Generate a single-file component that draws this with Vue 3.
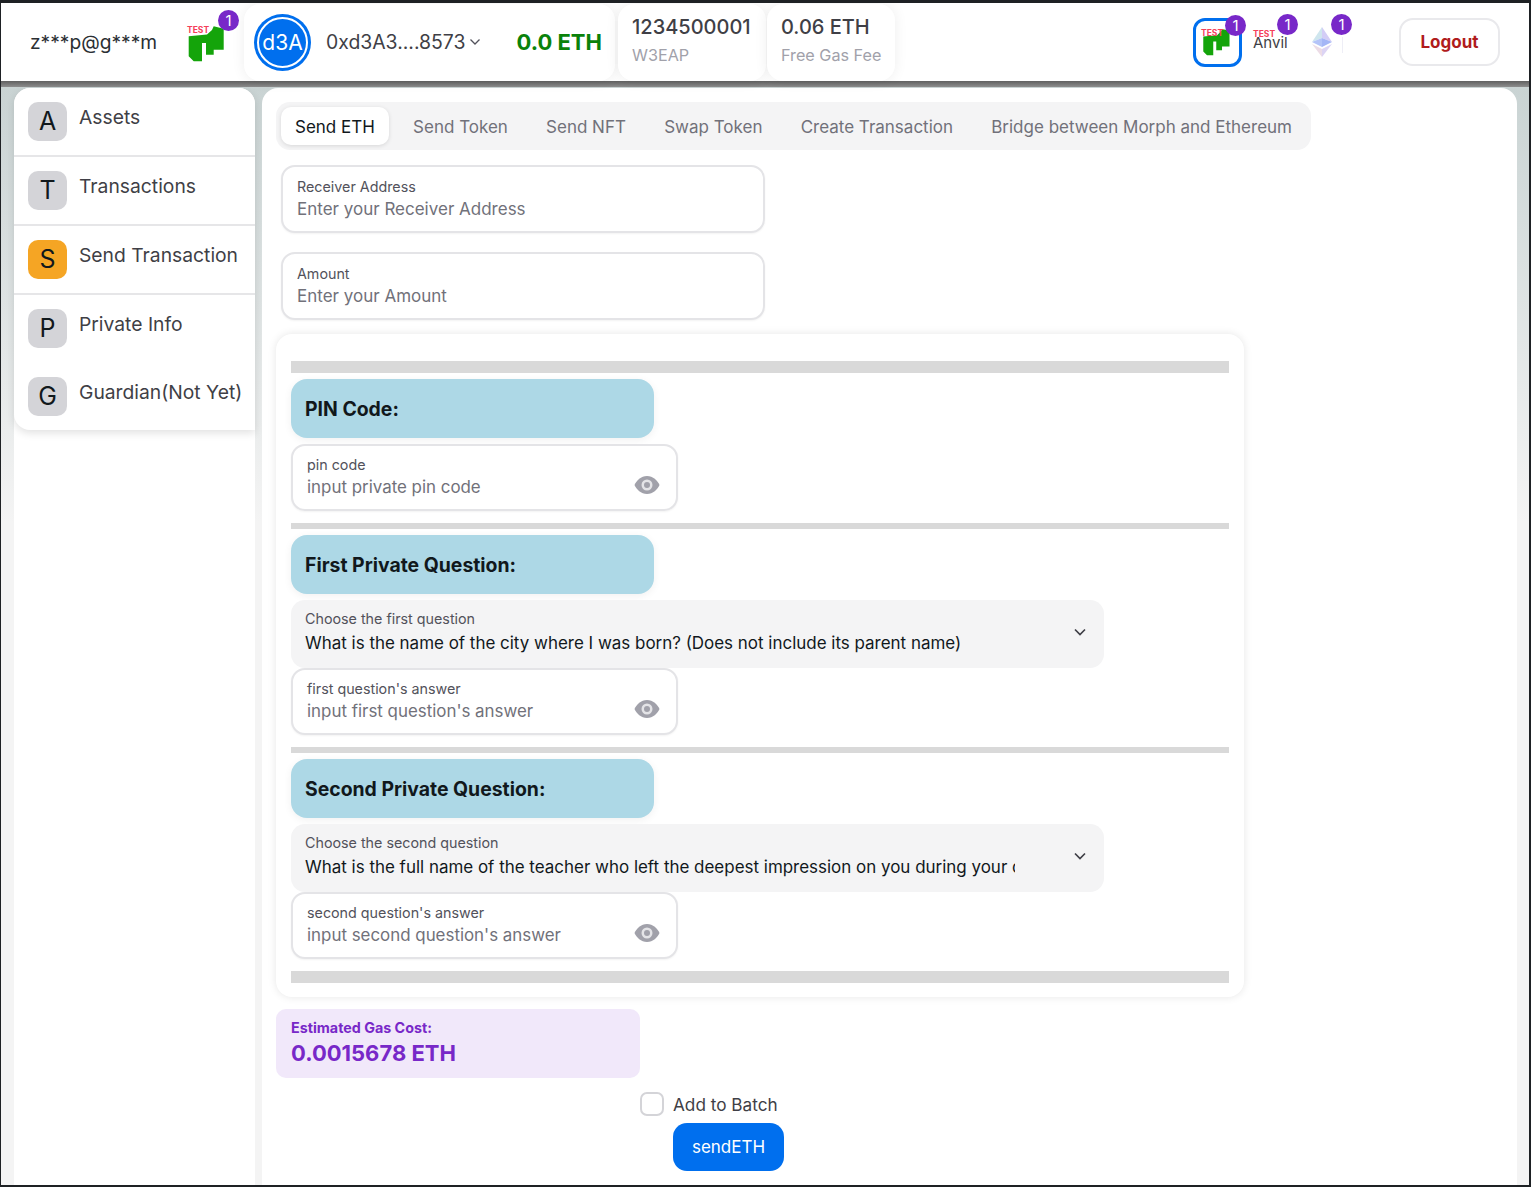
<template>
  <div class="page">
    <!-- header -->
    <header class="topbar">
      <span class="email">z***p@g***m</span>
      <div class="chain chain-main">
        <span class="test">TEST</span>
        <svg class="morph" viewBox="0 0 40 40"><polygon :points="logoPoints" fill="#14a40a" /></svg>
        <span class="badge">1</span>
      </div>
      <div class="wallet">
        <div class="avatar"><span>d3A</span></div>
        <span class="address">0xd3A3....8573</span>
        <svg class="addr-chevron" viewBox="0 0 12 8"><path d="M1.5 1.5 6 6l4.500-4.500" fill="none" stroke="#52525b" stroke-width="1.300" /></svg>
        <span class="balance">0.0 ETH</span>
      </div>
      <div class="stat stat-id">
        <span class="stat-top">1234500001</span>
        <span class="stat-sub">W3EAP</span>
      </div>
      <div class="stat stat-gas">
        <span class="stat-top">0.06 ETH</span>
        <span class="stat-sub">Free Gas Fee</span>
      </div>

      <div class="networks">
        <div class="net net-active">
          <span class="test">TEST</span>
          <svg class="morph-small" viewBox="0 0 40 40"><polygon :points="logoPoints" fill="#14a40a" /></svg>
          <span class="badge">1</span>
        </div>
        <div class="net net-anvil">
          <span class="test">TEST</span>
          <span class="anvil">Anvil</span>
          <span class="badge">1</span>
        </div>
        <div class="net net-eth">
          <svg class="eth" viewBox="0 0 20 30">
            <polygon points="10,0 10,11 20,15" fill="#d3cdf6" />
            <polygon points="10,0 10,11 0,15" fill="#cfe6ee" />
            <polygon points="10,11 20,15 10,20" fill="#a4b6f6" />
            <polygon points="10,11 0,15 10,20" fill="#b4c4f8" />
            <polygon points="10,22 20,17 10,30" fill="#dcd4f4" />
            <polygon points="10,22 0,17 10,30" fill="#ecdce6" />
          </svg>
          <span class="badge">1</span>
        </div>
      </div>
      <button class="logout">Logout</button>
    </header>
    <div class="band"></div>

    <div class="content">
      <!-- sidebar -->
      <aside class="sidebar">
        <div class="menu">
          <div v-for="item in menu" :key="item.label" class="menu-item" :class="{ ruled: item.ruled, short: !item.ruled }">
            <span class="menu-letter" :class="{ current: item.current }">{{ item.letter }}</span>
            <span class="menu-label">{{ item.label }}</span>
          </div>
        </div>
      </aside>

      <!-- main panel -->
      <main class="panel">
        <div class="tabs">
          <button v-for="(tab, i) in tabs" :key="tab" class="tab" :class="{ active: i === 0 }">{{ tab }}</button>
        </div>

        <label class="field wide first-field">
          <span class="field-label">Receiver Address</span>
          <input class="field-input" placeholder="Enter your Receiver Address" />
        </label>
        <label class="field wide second-field">
          <span class="field-label">Amount</span>
          <input class="field-input" placeholder="Enter your Amount" />
        </label>

        <section class="secret-card">
          <div class="rule rule-thick"></div>
          <template v-for="(block, i) in blocks" :key="block.title">
            <div class="block-title">{{ block.title }}</div>
            <div v-if="block.select" class="select">
              <div class="select-text">
                <span class="select-label">{{ block.select.label }}</span>
                <span class="select-value">{{ block.select.value }}</span>
              </div>
              <svg class="select-chevron" viewBox="0 0 12 8"><path d="M1 1.500 6 6.500l5-5" fill="none" stroke="#3f3f46" stroke-width="1.700" /></svg>
            </div>
            <label class="field narrow" :class="{ spaced: !block.select }">
              <span class="field-label">{{ block.label }}</span>
              <input class="field-input" :placeholder="block.placeholder" />
              <svg class="eye" viewBox="0 0 26 20">
                <path d="M13 1C7 1 2.500 5.500.5 10c2 4.500 6.500 9 12.500 9s10.500-4.500 12.500-9C23.500 5.500 19 1 13 1Z" fill="#a1a1aa" />
                <circle cx="13" cy="10" r="5.500" fill="#e4e4e7" />
                <circle cx="13" cy="10" r="3" fill="#a1a1aa" />
              </svg>
            </label>
            <div class="rule" :class="i === blocks.length - 1 ? 'rule-thick' : 'rule-thin'"></div>
          </template>
        </section>

        <div class="gas">
          <span class="gas-label">Estimated Gas Cost:</span>
          <span class="gas-value">0.0015678 ETH</span>
        </div>

        <label class="batch">
          <span class="checkbox"></span>
          <span>Add to Batch</span>
        </label>
        <button class="send">sendETH</button>
      </main>
    </div>
  </div>
</template>

<script setup>
const logoPoints = '1.700,11.300 20,9.500 25,5 26.700,1.300 36.700,3.700 36.700,24.700 26.700,24.700 26.700,29.700 19,29.700 19,18 15,18 15,36.300 6.700,36.300 1.700,31.300'

const menu = [
  { letter: 'A', label: 'Assets', ruled: true },
  { letter: 'T', label: 'Transactions', ruled: true },
  { letter: 'S', label: 'Send Transaction', ruled: true, current: true },
  { letter: 'P', label: 'Private Info' },
  { letter: 'G', label: 'Guardian(Not Yet)' }
]

const tabs = ['Send ETH', 'Send Token', 'Send NFT', 'Swap Token', 'Create Transaction', 'Bridge between Morph and Ethereum']

const blocks = [
  {
    title: 'PIN Code:',
    label: 'pin code',
    placeholder: 'input private pin code'
  },
  {
    title: 'First Private Question:',
    select: {
      label: 'Choose the first question',
      value: 'What is the name of the city where I was born? (Does not include its parent name)'
    },
    label: "first question's answer",
    placeholder: "input first question's answer"
  },
  {
    title: 'Second Private Question:',
    select: {
      label: 'Choose the second question',
      value: 'What is the full name of the teacher who left the deepest impression on you during your childhood?'
    },
    label: "second question's answer",
    placeholder: "input second question's answer"
  }
]
</script>

<style>
html, body {
  margin: 0;
  background: #1e2124;
}
</style>

<style scoped>
.page {
  box-sizing: border-box;
  width: 1531px;
  height: 1187px;
  overflow: hidden;
  border-style: solid;
  border-color: #1e2124;
  border-width: 3px 2px 2px 1px;
  background: linear-gradient(#c9d3d3 84px, #f4f4f4 520px);
  font-family: Inter, "Liberation Sans", sans-serif;
  color: #11181c;
  display: flex;
  flex-direction: column;
}

.topbar {
  height: 78px;
  flex: none;
  display: flex;
  align-items: center;
  background: #fff;
  position: relative;
}

.email {
  margin-left: 29px;
  width: 157px;
  font-size: 19.200px;
  color: #2b2f33;
}

.chain-main {
  position: relative;
  width: 57px;
  height: 78px;
}

.morph {
  position: absolute;
  left: 0;
  top: 22px;
  width: 40px;
  height: 40px;
}

.test {
  position: absolute;
  z-index: 1;
  color: #f5405a;
  font-size: 8.500px;
  font-weight: 700;
  line-height: 10px;
}

.chain-main .test {
  left: 0;
  top: 22px;
}

.badge {
  position: absolute;
  z-index: 2;
  width: 21px;
  height: 21px;
  border-radius: 50%;
  background: #7828c8;
  color: #fff;
  font-size: 15px;
  line-height: 21px;
  text-align: center;
}

.chain-main .badge {
  left: 31px;
  top: 7px;
}

.wallet {
  width: 371px;
  height: 77px;
  flex: none;
  box-sizing: border-box;
  border-radius: 16px;
  background: #fff;
  box-shadow: 0 0 14px rgba(0, 0, 0, 0.07);
  display: flex;
  align-items: center;
  padding-left: 10px;
}

.avatar {
  box-sizing: border-box;
  width: 57px;
  height: 57px;
  flex: none;
  border-radius: 50%;
  background: #006fee;
  padding: 3px;
}

.avatar span {
  box-sizing: border-box;
  display: flex;
  align-items: center;
  justify-content: center;
  width: 100%;
  height: 100%;
  border: 2px solid #fff;
  border-radius: 50%;
  color: #fff;
  font-size: 21px;
}

.address {
  margin-left: 15px;
  font-size: 19.400px;
  color: #3f3f46;
}

.addr-chevron {
  width: 12px;
  height: 8px;
  margin-left: 4px;
}

.balance {
  margin-left: 35px;
  font-size: 22px;
  font-weight: 700;
  color: #0a820a;
}

.stat {
  flex: none;
  box-sizing: border-box;
  height: 77px;
  border-radius: 16px;
  background: #fff;
  box-shadow: 0 0 14px rgba(0, 0, 0, 0.07);
  padding: 11px 14px 0;
  display: flex;
  flex-direction: column;
  gap: 6px;
}

.stat-id {
  width: 148px;
  margin-left: 3px;
}

.stat-gas {
  width: 128px;
  margin-left: 1px;
}

.stat-top {
  font-size: 20px;
  font-weight: 500;
  color: #3f3f46;
  white-space: nowrap;
}

.stat-sub {
  font-size: 16.200px;
  line-height: 20px;
  color: #a1a1aa;
  white-space: nowrap;
}

.networks {
  margin-left: 298px;
  width: 206px;
  height: 78px;
  position: relative;
  display: flex;
  align-items: center;
}

.net {
  position: relative;
  flex: none;
}

.net-active {
  box-sizing: border-box;
  width: 49px;
  height: 49px;
  border: 3px solid #006fee;
  border-radius: 12px;
}

.morph-small {
  position: absolute;
  left: 6px;
  top: 7px;
  width: 30px;
  height: 30px;
}

.net-active .test {
  left: 5px;
  top: 7px;
}

.net-active .badge {
  left: 29px;
  top: -6px;
}

.net-anvil {
  margin-left: 11px;
  width: 35px;
  height: 49px;
}

.net-anvil .test {
  left: 0;
  top: 11px;
}

.anvil {
  position: absolute;
  left: 0;
  top: 16px;
  font-size: 15px;
  line-height: 18px;
  color: #3f3f46;
}

.net-anvil .badge {
  left: 24px;
  top: -4px;
}

.net-eth {
  margin-left: 24px;
  width: 20px;
  height: 49px;
}

.eth {
  position: absolute;
  left: 0;
  top: 9px;
  width: 20px;
  height: 30px;
}

/* faint line under the badge, as in the network switcher */
.net-eth::after {
  content: "";
  position: absolute;
  left: 30px;
  top: 19px;
  width: 1px;
  height: 16px;
  background: #eeeef6;
}

.net-eth .badge {
  left: 19px;
  top: -4px;
}

.logout {
  box-sizing: border-box;
  width: 101px;
  height: 48px;
  flex: none;
  border: 2px solid #e9e9ec;
  border-radius: 14px;
  background: #fff;
  color: #b01c1c;
  font-family: inherit;
  font-size: 17px;
  font-weight: 700;
}

.band {
  height: 6px;
  flex: none;
  background: linear-gradient(#606060, #8d8d8d);
}

.content {
  flex: 1;
  min-height: 0;
  display: flex;
  gap: 7px;
  padding: 1px 0 0 13px;
}

.sidebar {
  width: 241px;
  flex: none;
  background: #fff;
  border-radius: 16px 16px 0 0;
}

.menu {
  border-radius: 16px 16px 0 16px;
  background: #fff;
  box-shadow: 0 3px 8px rgba(0, 0, 0, 0.12);
  height: 342px;
}

.menu-item {
  box-sizing: border-box;
  display: flex;
  align-items: flex-start;
  gap: 12px;
  padding: 14px 0 0 14px;
}

.menu-item.ruled {
  height: 69px;
  border-bottom: 2px solid #e6e6e8;
}

.menu-item.short {
  height: 68px;
}

.menu-letter {
  width: 39px;
  height: 39px;
  flex: none;
  border-radius: 10px;
  background: #d4d4d8;
  color: #11181c;
  font-size: 25px;
  line-height: 39px;
  text-align: center;
}

.menu-letter.current {
  background: #f5a524;
}

.menu-label {
  font-size: 19.300px;
  line-height: 26px;
  margin-top: 2px;
  color: #3f3f46;
  white-space: nowrap;
}

.panel {
  width: 1255px;
  flex: none;
  box-sizing: border-box;
  background: #fff;
  border-radius: 16px 16px 0 0;
  padding: 14px 0 0 14px;
  display: flex;
  flex-direction: column;
  align-items: flex-start;
}

.tabs {
  box-sizing: border-box;
  height: 48px;
  display: flex;
  align-items: center;
  gap: 10.200px;
  padding: 0 5px;
  background: #f4f4f5;
  border-radius: 14px;
}

.tab {
  height: 38px;
  padding: 1px 14px 0;
  border: 0;
  border-radius: 10px;
  background: none;
  color: #71717a;
  font-family: inherit;
  font-size: 17px;
  white-space: nowrap;
}

.tab.active {
  background: #fff;
  color: #11181c;
  box-shadow: 0 1px 4px rgba(0, 0, 0, 0.12);
}

.field {
  box-sizing: border-box;
  position: relative;
  display: flex;
  flex-direction: column;
  border: 2px solid #e4e4e7;
  border-radius: 14px;
  background: #fff;
  padding: 11px 14px 0;
  height: 68px;
  box-shadow: 0 1px 2px rgba(0, 0, 0, 0.05);
}

.wide {
  width: 484px;
  margin-left: 5px;
}

.first-field {
  margin-top: 15px;
}

.second-field {
  margin-top: 19px;
}

.narrow {
  width: 387px;
  height: 67px;
  padding-top: 10px;
}

.spaced {
  margin-top: 6px;
}

.field-label {
  font-size: 14.300px;
  line-height: 18px;
  color: #52525b;
}

.field-input {
  border: 0;
  outline: 0;
  padding: 0;
  margin-top: 2px;
  background: none;
  font-family: inherit;
  font-size: 17px;
  line-height: 22px;
  width: 300px;
  color: #11181c;
}

.narrow .field-input {
  font-size: 16.900px;
}

.field-input::placeholder {
  color: #71717a;
  opacity: 1;
}

.eye {
  position: absolute;
  right: 16px;
  top: 29px;
  width: 26px;
  height: 20px;
}

.secret-card {
  box-sizing: border-box;
  width: 968px;
  margin-top: 14px;
  padding: 27px 15px 14px;
  background: #fff;
  border-radius: 16px;
  box-shadow: 0 0 8px rgba(0, 0, 0, 0.1);
}

.rule {
  background: #d9d9d9;
}

.rule-thick {
  height: 12px;
}

.rule-thin {
  height: 6px;
}

.block-title {
  box-sizing: border-box;
  width: 363px;
  height: 59px;
  margin-top: 6px;
  padding-left: 14px;
  display: flex;
  align-items: center;
  background: #add8e6;
  border-radius: 16px;
  font-size: 19.400px;
  font-weight: 700;
  box-shadow: 0 2px 8px rgba(0, 0, 0, 0.06);
}

.select {
  box-sizing: border-box;
  width: 813px;
  height: 68px;
  margin-top: 6px;
  padding: 10px 18px 0 14px;
  display: flex;
  align-items: flex-start;
  justify-content: space-between;
  background: #f4f4f5;
  border-radius: 14px;
}

.select-text {
  display: flex;
  flex-direction: column;
  width: 710px;
  overflow: hidden;
  white-space: nowrap;
}

.select-label {
  font-size: 14.300px;
  line-height: 18px;
  color: #52525b;
}

.select-value {
  font-size: 16.970px;
  line-height: 22px;
  margin-top: 4px;
  color: #11181c;
}

.select-chevron {
  width: 12px;
  height: 8px;
  margin-top: 18px;
}

.narrow + .rule {
  margin-top: 12px;
}

.gas {
  box-sizing: border-box;
  width: 364px;
  height: 69px;
  margin-top: 12px;
  padding: 10px 15px 0;
  display: flex;
  flex-direction: column;
  background: #f1e8fa;
  border-radius: 10px;
  color: #7828c8;
  font-weight: 700;
}

.gas-label {
  font-size: 14.300px;
  line-height: 18px;
}

.gas-value {
  font-size: 22px;
  line-height: 30px;
  margin-top: 1px;
}

.batch {
  display: flex;
  align-items: center;
  gap: 9px;
  height: 24px;
  margin: 14px 0 0 364px;
  font-size: 17.200px;
  color: #3f3f46;
}

.checkbox {
  box-sizing: border-box;
  width: 24px;
  height: 24px;
  border: 2px solid #d4d4d8;
  border-radius: 7px;
}

.send {
  width: 111px;
  height: 48px;
  margin: 7px 0 0 397px;
  border: 0;
  border-radius: 14px;
  background: #006fee;
  color: #fff;
  font-family: inherit;
  font-size: 17px;
}
</style>
